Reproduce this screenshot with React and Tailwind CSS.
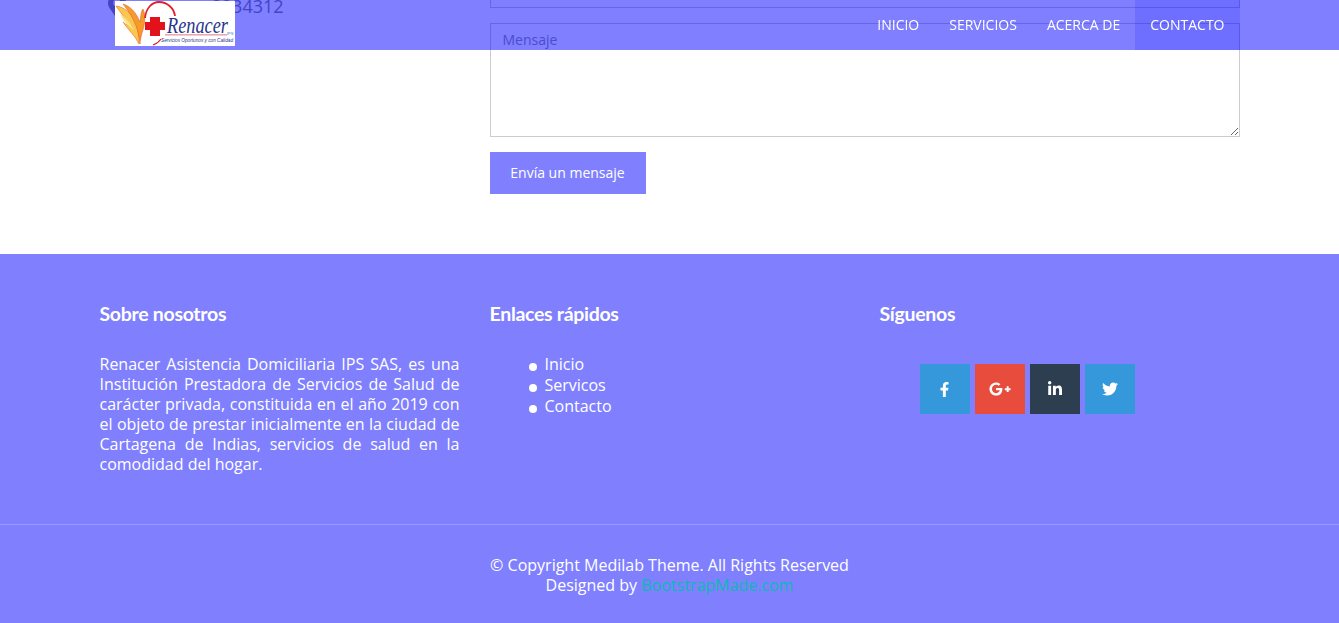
import React from "react";
import { FaFacebookF, FaGooglePlusG, FaLinkedinIn, FaTwitter, FaMapMarkerAlt } from "react-icons/fa";

const navLinks = ["Inicio", "Servicios", "Acerca de", "Contacto"];
const quickLinks = ["Inicio", "Servicos", "Contacto"];

const socials = [
  { icon: FaFacebookF, color: "bg-[#3498db]", size: 15 },
  { icon: FaGooglePlusG, color: "bg-[#e74c3c]", size: 22 },
  { icon: FaLinkedinIn, color: "bg-[#2c3e50]", size: 16 },
  { icon: FaTwitter, color: "bg-[#3498db]", size: 16 },
];

// Renacer IPS logo, drawn since there are no image files
function Logo() {
  return (
    <svg width="120" height="45" viewBox="0 0 120 45" className="block bg-white">
      <path d="M1 5 C9 6 17 12 21 22 C23 28 24 36 24 43 C20 34 13 29 8 21 C11 24 14 25 17 26 C11 19 6 12 1 5Z" fill="#f9c74f" stroke="#ef7d22" strokeWidth="0.7" />
      <path d="M8 3 C15 5 21 11 25 21 C26 14 26 10 28 8 C31 14 30 24 27 32 C26 36 25 40 25 43 C24 30 20 18 8 3Z" fill="#f59b2b" stroke="#e5502a" strokeWidth="0.5" />
      <path d="M5 13 C10 16 15 21 19 29 C14 26 9 21 5 13Z" fill="#fde28a" />
      <path d="M30 17 C31 7 37 1 44 1 C52 1 59 7 60 15" fill="none" stroke="#e3202a" strokeWidth="1.8" />
      <path d="M38 44 C41 43 44 41 46 38" fill="none" stroke="#e3202a" strokeWidth="1.2" />
      <path d="M35 16 H45 V21 H50 V29 H45 V35 H35 V29 H30 V21 H35Z" fill="#e3111c" />
      <text x="52" y="32" fontFamily="'Liberation Serif', serif" fontStyle="italic" fontSize="23" textLength="61" lengthAdjust="spacingAndGlyphs" fill="#27348b">Renacer</text>
      <rect x="50" y="33.5" width="62" height="0.8" fill="#d9535b" />
      <text x="112" y="34" fontFamily="'Liberation Sans', sans-serif" fontSize="4" fill="#3c78c8">IPS</text>
      <text x="46" y="41" fontFamily="'Liberation Sans', sans-serif" fontStyle="italic" fontSize="4.6" textLength="72" lengthAdjust="spacingAndGlyphs" fill="#27348b">Servicios Oportunos y con Calidad</text>
    </svg>
  );
}

function Header() {
  return (
    <nav className="fixed top-0 left-0 z-10 h-[50px] w-full bg-[rgba(0,0,255,0.5)]">
      <div className="mx-auto flex h-full w-[1170px] items-start justify-between pl-[30.5px] pr-[15px]">
        <div className="pt-px">
          <Logo />
        </div>
        <ul className="flex h-full text-[14px] uppercase text-white">
          {navLinks.map((link, i) => (
            <li
              key={link}
              className={`flex h-full items-center px-[15px] pb-[2px] ${i === 3 ? "bg-[rgba(0,0,255,0.12)]" : ""}`}
            >
              {link}
            </li>
          ))}
        </ul>
      </div>
    </nav>
  );
}

function ContactSection() {
  return (
    <section className="h-[254px] overflow-hidden bg-white">
      <div className="mx-auto -mt-[33px] flex w-[1170px]">
        <div className="w-[390px] pl-[20px]">
          <div className="mt-[27px] flex items-center text-[18px] leading-[24px] text-[#888]">
            <FaMapMarkerAlt size={24} className="shrink-0" />
            <span className="ml-[83px]">3234312</span>
          </div>
        </div>
        <form className="w-[780px] px-[15px]">
          <input className="block h-[41px] w-full border border-[#ccc] px-3" />
          <textarea
            placeholder="Mensaje"
            className="mt-[15px] block h-[114px] w-full border border-[#ccc] px-3 py-[5px] text-[14px] placeholder:text-[#999]"
          />
          <button
            type="button"
            className="mt-[15px] h-[42px] w-[156px] bg-[#8080ff] pb-[2px] text-[14px] text-white"
          >
            Envía un mensaje
          </button>
        </form>
      </div>
    </section>
  );
}

function Heading({ children }) {
  return (
    <h4 className="mb-[30px] text-[19.5px] font-bold leading-[20px] tracking-[-0.3px] text-white [font-family:Lato,sans-serif]">
      {children}
    </h4>
  );
}

function Footer() {
  return (
    <footer className="bg-[#8080ff] text-[16px] leading-[20px] text-white">
      <div className="mx-auto flex w-[1170px] pb-[50px] pt-[50px]">
        <div className="w-[390px] px-[15px]">
          <Heading>Sobre nosotros</Heading>
          <p className="text-justify">
            Renacer Asistencia Domiciliaria IPS SAS, es una Institución Prestadora de Servicios de Salud de
            carácter privada, constituida en el año 2019 con el objeto de prestar inicialmente en la ciudad de
            Cartagena de Indias, servicios de salud en la comodidad del hogar.
          </p>
        </div>
        <div className="w-[390px] px-[15px]">
          <Heading>Enlaces rápidos</Heading>
          <ul className="pl-[39px] leading-[21px]">
            {quickLinks.map((link) => (
              <li key={link} className="flex items-center">
                <span className="mr-[8px] mt-[4px] h-[8px] w-[8px] rounded-full bg-white" />
                {link}
              </li>
            ))}
          </ul>
        </div>
        <div className="w-[390px] px-[15px]">
          <Heading>Síguenos</Heading>
          <div className="flex gap-[5px] pl-[40px] pt-[10px]">
            {socials.map(({ icon: Icon, color, size }, i) => (
              <a key={i} className={`flex h-[50px] w-[50px] items-center justify-center text-white ${color}`}>
                <Icon size={size} />
              </a>
            ))}
          </div>
        </div>
      </div>
      <div className="border-t border-white/20 pb-[28px] pt-[30px] text-center">
        <p>© Copyright Medilab Theme. All Rights Reserved</p>
        <p>
          Designed by <a className="text-[#0cb8b6]">BootstrapMade.com</a>
        </p>
      </div>
    </footer>
  );
}

export default function App() {
  return (
    <div className="[font-family:'Open_Sans',sans-serif]">
      <Header />
      <ContactSection />
      <Footer />
    </div>
  );
}
